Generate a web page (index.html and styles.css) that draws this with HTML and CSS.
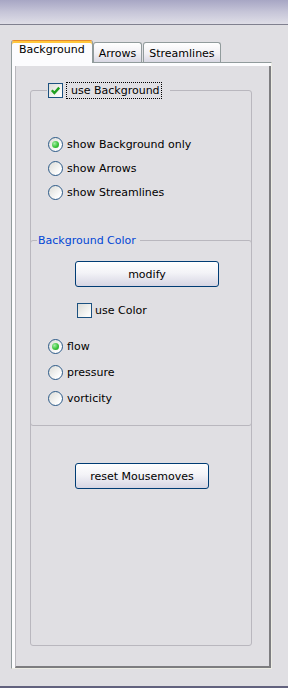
FILE: index.html
```html
<!DOCTYPE html>
<html lang="en">
<head>
    <meta charset="UTF-8">
    <meta name="viewport" content="width=device-width, initial-scale=1.0">
    <title>Background settings</title>
    <link rel="stylesheet" href="styles.css">
</head>
<body>
    <div class="titlebar"></div>

    <div class="tabs">
        <div class="tab tab-active">Background</div>
        <div class="tab">Arrows</div>
        <div class="tab tab-last">Streamlines</div>
    </div>

    <div class="panel">
        <div class="panel-body">
            <fieldset class="group group-main">
                <legend class="toggle">
                    <span class="check"><svg width="13" height="13" viewBox="0 0 13 13"><path d="M2.8 6.2l2.6 2.8 4.8-5.4" fill="none" stroke="#21a121" stroke-width="2.4"/></svg></span>
                    <span class="focus-label">use Background</span>
                </legend>

                <div class="radio-list">
                    <div class="option"><span class="radio radio-on"></span>show Background only</div>
                    <div class="option"><span class="radio"></span>show Arrows</div>
                    <div class="option"><span class="radio"></span>show Streamlines</div>
                </div>

                <fieldset class="group group-color">
                    <legend class="group-title">Background Color</legend>
                    <button class="btn btn-modify">modify</button>
                    <div class="option option-check"><span class="check"></span>use Color</div>
                    <div class="field-list">
                        <div class="option option-tall"><span class="radio radio-on"></span>flow</div>
                        <div class="option option-tall"><span class="radio"></span>pressure</div>
                        <div class="option option-tall"><span class="radio"></span>vorticity</div>
                    </div>
                </fieldset>

                <button class="btn btn-reset">reset Mousemoves</button>
            </fieldset>
        </div>
    </div>

    <div class="statusline"></div>
</body>
</html>
```

FILE: styles.css
```css
html, body {
    margin: 0;
    height: 688px;
    overflow: hidden;
}

body {
    display: flex;
    flex-direction: column;
    background-color: #e0dfe3;
    font-family: "DejaVu Sans", Verdana, sans-serif;
    font-size: 11px;
    line-height: 13px;
    color: #000;
}

.titlebar {
    height: 24px;
    background: linear-gradient(to bottom, #a7a6c4, #c6c5d8 50%, #dfdee7);
    border-bottom: 1px solid #80808f;
}

.tabs {
    display: flex;
    align-items: flex-end;
    height: 22px;
    margin-top: 15px;
    padding-left: 11px;
}

.tab {
    box-sizing: border-box;
    height: 20px;
    padding: 4px 5px 2px;
    border: 1px solid #919b9c;
    border-bottom: none;
    border-radius: 3px 3px 0 0;
    background: linear-gradient(to bottom, #ffffff, #f1f0f4 55%, #d8d7e3);
    white-space: nowrap;
}

.tab-active {
    position: relative;
    z-index: 1;
    height: 23px;
    margin-bottom: -1px;
    padding: 2px 7px 5px;
    border-top: 1px solid #e68b2c;
    box-shadow: inset 0 2px 0 #ffc73c;
    background: #fcfcfe;
}

.tab-last {
    margin-left: 1px;
}

.panel {
    flex: 1;
    display: flex;
    margin: 0 16px 17px 11px;
    padding: 3px 0 0 3px;
    background: #fcfcfe;
    border-top: 1px solid #919b9c;
    border-left: 1px solid #919b9c;
    border-right: 1px solid #ecece4;
    border-bottom: 1px solid #ecece4;
}

.panel-body {
    flex: 1;
    display: flex;
    flex-direction: column;
    background: #e0dfe3;
    border-left: 1px solid #b9b8bd;
    border-right: 2px solid #7d7d80;
    border-bottom: 2px solid #7d7d80;
}

.group {
    min-inline-size: 0;
    padding: 0;
    border: 1px solid #b9b7be;
    border-radius: 3px;
}

.group-main {
    flex: 1;
    margin: 16px 17px 20px 14px;
}

.toggle {
    display: flex;
    align-items: center;
    height: 17px;
    margin-left: 16px;
    padding: 0 8px 0 1px;
}

.focus-label {
    margin-left: 3px;
    padding: 1px 1px 0 4px;
    line-height: 14px;
    border: 1px dotted #000;
}

.check {
    box-sizing: border-box;
    display: flex;
    align-items: center;
    justify-content: center;
    width: 15px;
    height: 15px;
    flex: none;
    border: 1px solid #1c5180;
    background: linear-gradient(135deg, #dcdcd7, #fbfbf9 80%);
}

.radio {
    box-sizing: border-box;
    display: flex;
    align-items: center;
    justify-content: center;
    width: 15px;
    height: 15px;
    flex: none;
    margin-right: 4px;
    border: 1px solid #2c5a88;
    border-radius: 50%;
    background: linear-gradient(135deg, #dcdcd7, #ffffff 80%);
}

.radio-on::after {
    content: "";
    width: 7px;
    height: 7px;
    border-radius: 50%;
    background: radial-gradient(circle at 35% 35%, #a6eea6, #3cc43c 55%, #1f9a1f);
}

.radio-list {
    padding-top: 33px;
}

.field-list {
    margin-top: 11px;
}

.option {
    display: flex;
    align-items: center;
    height: 24px;
    padding-left: 17px;
}

.option-tall {
    height: 26px;
}

.option-check {
    margin-top: 11px;
    padding-left: 46px;
}

.option-check .check {
    margin-right: 3px;
}

.group-color {
    margin: 30px -1px 0;
    padding-bottom: 14px;
}

.group-title {
    margin-left: 6px;
    padding: 0 4px 0 1px;
    color: #0046d5;
}

.btn {
    box-sizing: border-box;
    display: block;
    height: 26px;
    margin-left: 44px;
    padding: 0;
    font: inherit;
    color: #000;
    text-align: center;
    border: 1px solid #003c74;
    border-radius: 3px;
    background: linear-gradient(to bottom, #ffffff, #f3f3f7 45%, #d6d5e3);
}

.btn-modify {
    width: 144px;
    margin-top: 14px;
}

.btn-reset {
    width: 134px;
    margin-top: 37px;
}

.statusline {
    height: 2px;
    background: #62627e;
}
```
